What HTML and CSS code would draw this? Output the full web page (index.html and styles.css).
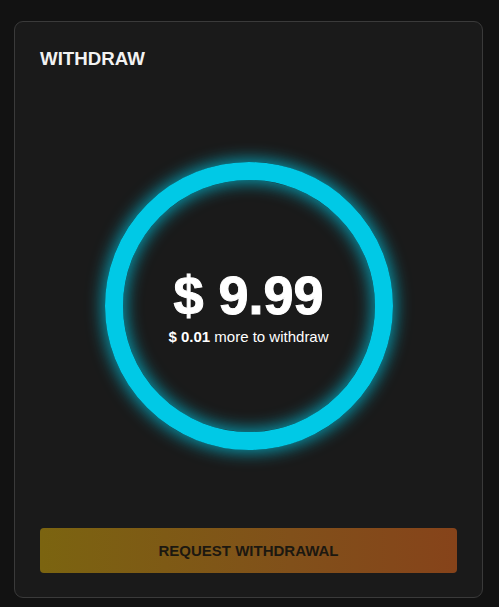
FILE: index.html
```html
<!DOCTYPE html>
<html>
<head>
<meta charset="utf-8">
<link rel="stylesheet" href="styles.css">
</head>
<body>
<div class="card">
  <h2 class="title">WITHDRAW</h2>
  <div class="ring-wrap">
    <div class="ring">
      <div class="amount">$ 9.99</div>
      <div class="sub"><b>$ 0.01</b> more to withdraw</div>
    </div>
  </div>
  <button class="btn">REQUEST WITHDRAWAL</button>
</div>
</body>
</html>
```
FILE: styles.css
```css
html, body {
  margin: 0;
  padding: 0;
  background: #121212;
}
body {
  padding: 21px 16px 9px 14px;
  font-family: "Liberation Sans", Arial, sans-serif;
}
.card {
  box-sizing: border-box;
  height: 577px;
  border: 1px solid #3a3a3a;
  border-radius: 9px;
  background: #1a1a1a;
  padding: 26px 25px 24px 25px;
  display: flex;
  flex-direction: column;
}
.title {
  margin: 0;
  font-size: 18.7px;
  line-height: 22px;
  font-weight: bold;
  color: #f2f2f2;
}
.ring-wrap {
  display: flex;
  justify-content: center;
  margin-top: 92px;
}
.ring {
  box-sizing: border-box;
  width: 288px;
  height: 288px;
  border: 18px solid #00c9e6;
  border-radius: 50%;
  box-shadow: 0 0 16px 3px rgba(0, 201, 230, 0.7), inset 0 0 16px 3px rgba(0, 201, 230, 0.7);
  display: flex;
  flex-direction: column;
  align-items: center;
  justify-content: center;
  color: #ffffff;
}
.amount {
  font-size: 54px;
  font-weight: bold;
  line-height: 58px;
  margin-top: 0;
  -webkit-text-stroke: 1px #ffffff;
}
.sub {
  font-size: 15px;
  line-height: 18px;
  margin-top: 4px;
}
.sub b {
  font-weight: bold;
}
.btn {
  margin-top: auto;
  height: 45px;
  border: none;
  border-radius: 4px;
  background: linear-gradient(90deg, #7b6410 0%, #81501a 60%, #86431a 100%);
  color: #1c1810;
  font-family: "Liberation Sans", Arial, sans-serif;
  font-size: 15px;
  font-weight: bold;
  padding: 0;
}
```
